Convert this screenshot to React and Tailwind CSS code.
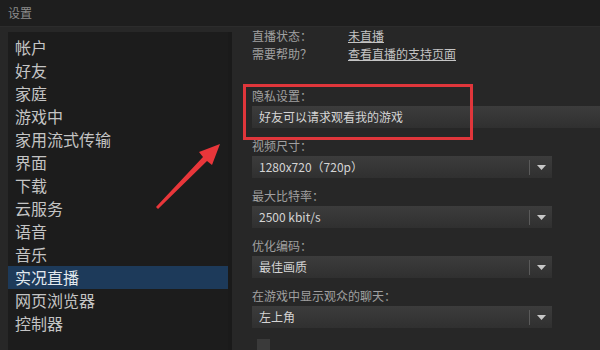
import React from "react";

const items = ["帐户","好友","家庭","游戏中","家用流式传输","界面","下载","云服务","语音","音乐","实况直播","网页浏览器","控制器"];

function Dropdown({ text, full }) {
  return (
    <div className={`h-[22px] flex items-center bg-gradient-to-b from-[#3c3c3c] to-[#303030] ${full ? "w-full" : "w-[300px]"}`}>
      <div className="flex-1 pl-[7px] text-[12px] text-[#d4d4d4] whitespace-nowrap">{text}</div>
      {!full && (
        <div className="flex items-center h-full">
          <div className="w-px h-[15px] bg-[#5a5a5a]" />
          <div className="w-[22px] flex justify-center">
            <svg width="9" height="5" viewBox="0 0 9 5"><polygon points="0,0 9,0 4.5,5" fill="#c8c8c8" /></svg>
          </div>
        </div>
      )}
    </div>
  );
}

function Group({ label, value, full }) {
  return (
    <div className="flex flex-col">
      <div className="h-[18px] leading-[18px] text-[12px] text-[#a0a0a0]">{label}</div>
      <div className="mt-[1px]"><Dropdown text={value} full={full} /></div>
    </div>
  );
}

export default function App() {
  return (
    <div className="relative w-[600px] h-[350px] overflow-hidden bg-[#272727] flex flex-col" style={{ fontFamily: '"Noto Sans CJK SC", "Noto Sans", sans-serif' }}>
      <div className="h-[27px] shrink-0 bg-[#1e1e1e] border-b border-[#2c2c2c] flex items-center px-2 text-[12px] text-[#8c8c8c]">设置</div>
      <div className="flex flex-1 min-h-0">
        <div className="w-[232px] shrink-0 pl-2 pt-[5px] flex">
          <div className="w-[220px] bg-[#1c1c1c] pt-[4px] border-r-[4px] border-[#1a1a1a] box-content">
            {items.map((it) => (
              <div key={it} className={`h-[23px] leading-[23px] pl-[7px] text-[16px] ${it === "实况直播" ? "bg-[#1d3a5a] text-[#e2e8ee]" : "text-[#c4c4c4]"}`}>{it}</div>
            ))}
          </div>
        </div>
        <div className="flex-1 pl-[20px] flex flex-col">
          <div className="flex text-[12px] h-[18px] leading-[18px]">
            <div className="w-[96px] text-[#a0a0a0]">直播状态：</div>
            <div className="text-[#c4c4c4] underline">未直播</div>
          </div>
          <div className="flex text-[12px] h-[18px] leading-[18px]">
            <div className="w-[96px] text-[#a0a0a0]">需要帮助？</div>
            <div className="text-[#c4c4c4] underline">查看直播的支持页面</div>
          </div>
          <div className="h-px bg-[#4a4a4a] mt-[5px] mb-[19px]" />
          <div className="flex flex-col gap-[9px]">
            <Group label="隐私设置：" value="好友可以请求观看我的游戏" full />
            <Group label="视频尺寸：" value="1280x720（720p）" />
            <Group label="最大比特率：" value="2500 kbit/s" />
            <Group label="优化编码：" value="最佳画质" />
            <Group label="在游戏中显示观众的聊天：" value="左上角" />
            <div className="pl-[5px] pt-[2px]"><div className="w-[13px] h-[13px] bg-[#3a3a3a]" /></div>
          </div>
        </div>
      </div>
      <div className="absolute left-[243px] top-[84px] w-[230px] h-[56px] border-[3px] border-[#e0363b]" />
      <svg className="absolute left-0 top-0" width="600" height="350" viewBox="0 0 600 350">
        <polygon points="156,207 203,157 199,152 220,144 212,165 207,161 158,209" fill="#e8363a" />
      </svg>
    </div>
  );
}
